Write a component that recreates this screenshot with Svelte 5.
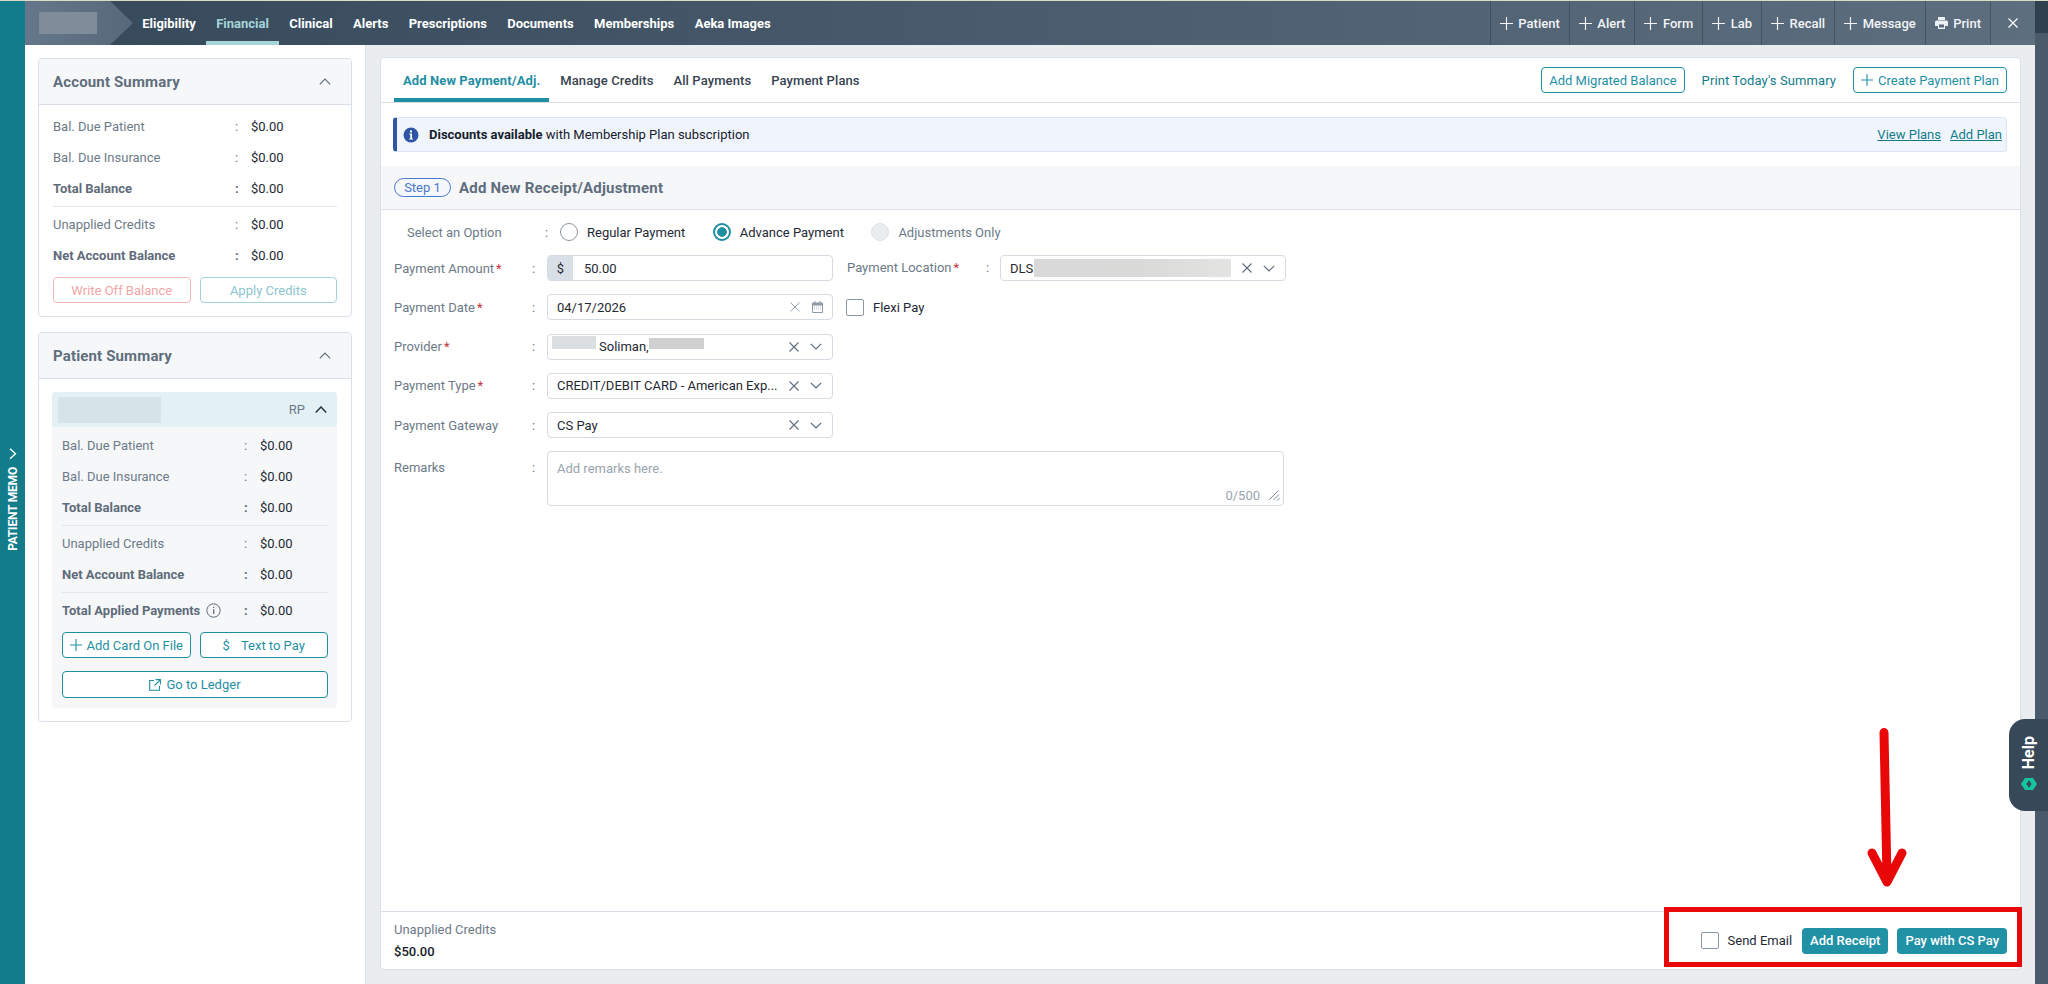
<script lang="ts">
	const navItems = ['Eligibility', 'Financial', 'Clinical', 'Alerts', 'Prescriptions', 'Documents', 'Memberships', 'Aeka Images'];
	const actions = ['Patient', 'Alert', 'Form', 'Lab', 'Recall', 'Message'];
	const tabs = ['Add New Payment/Adj.', 'Manage Credits', 'All Payments', 'Payment Plans'];
</script>

{#snippet plus(size = 13)}
	<svg class="ico" width={size} height={size} viewBox="0 0 13 13"><path d="M6.5 0v13M0 6.5h13" fill="none" stroke="currentColor" stroke-width="1.2" /></svg>
{/snippet}

{#snippet chevronUp(color = '#5f6e7c', weight = 1.1)}
	<svg class="ico" width="12" height="7" viewBox="0 0 12 7"><path d="M.8 6.4L6 1l5.200 5.400" fill="none" stroke={color} stroke-width={weight} /></svg>
{/snippet}

{#snippet clearIcon()}
	<svg class="ico clear" width="10" height="10" viewBox="0 0 10 10"><path d="M.5.5l9 9M9.5.5l-9 9" fill="none" stroke="#5f6e7c" stroke-width="1.1" /></svg>
{/snippet}

{#snippet chevronDown()}
	<svg class="ico chev" width="12" height="7" viewBox="0 0 12 7"><path d="M.8.8L6 6l5.2-5.2" fill="none" stroke="#5f6e7c" stroke-width="1.2" /></svg>
{/snippet}

{#snippet summaryRow(label, bold = false)}
	<div class="sum-row" class:bold>
		<span class="sum-label">{label}</span>
		<span class="sum-colon">:</span>
		<span class="sum-value">$0.00</span>
	</div>
{/snippet}

<div class="page">
	<aside class="memo">
		<div class="memo-label">
			<span>PATIENT MEMO</span>
			<svg width="8" height="12" viewBox="0 0 8 12"><path d="M1 1l5.5 5L1 11" fill="none" stroke="#fff" stroke-width="1.4" /></svg>
		</div>
	</aside>

	<div class="center">
		<header class="topbar">
			<div class="logo"><span class="logo-redact"></span></div>
			<nav class="nav">
				{#each navItems as item}
					<span class="nav-item" class:active={item === 'Financial'}>{item}</span>
				{/each}
			</nav>
			<div class="actions">
				{#each actions as action}
					<span class="action">{@render plus()}{action}</span>
				{/each}
				<span class="action">
					<svg class="ico" width="13" height="12" viewBox="0 0 13 12"><path d="M3 0h7v3H3zM1.5 3.6h10a1.5 1.5 0 0 1 1.5 1.5V9h-3v3H3V9H0V5.1a1.5 1.5 0 0 1 1.5-1.5z" fill="#eef1f3" /><rect x="4" y="7.5" width="5" height="3" fill="#5a6b7b" /></svg>
					Print
				</span>
				<span class="action close">
					<svg width="10" height="10" viewBox="0 0 10 10"><path d="M.5.5l9 9M9.5.5l-9 9" fill="none" stroke="#fff" stroke-width="1.2" /></svg>
				</span>
			</div>
		</header>

		<div class="body">
			<section class="left">
				<div class="panel account">
					<div class="panel-head">
						<h2>Account Summary</h2>
						{@render chevronUp()}
					</div>
					<div class="panel-body">
						{@render summaryRow('Bal. Due Patient')}
						{@render summaryRow('Bal. Due Insurance')}
						{@render summaryRow('Total Balance', true)}
						<hr />
						{@render summaryRow('Unapplied Credits')}
						{@render summaryRow('Net Account Balance', true)}
						<div class="panel-btns">
							<span class="btn-off red">Write Off Balance</span>
							<span class="btn-off teal">Apply Credits</span>
						</div>
					</div>
				</div>

				<div class="panel patient">
					<div class="panel-head">
						<h2>Patient Summary</h2>
						{@render chevronUp()}
					</div>
					<div class="patient-body">
						<div class="inner">
							<div class="inner-head">
								<span class="inner-redact"></span>
								<span class="rp">RP</span>
								{@render chevronUp('#26333f', 1.5)}
							</div>
							<div class="inner-rows">
								{@render summaryRow('Bal. Due Patient')}
								{@render summaryRow('Bal. Due Insurance')}
								{@render summaryRow('Total Balance', true)}
								<hr />
								{@render summaryRow('Unapplied Credits')}
								{@render summaryRow('Net Account Balance', true)}
								<hr />
								<div class="sum-row bold">
									<span class="sum-label">Total Applied Payments
										<svg class="ico info" width="15" height="15" viewBox="0 0 15 15"><circle cx="7.5" cy="7.5" r="6.7" fill="none" stroke="#5f6e7c" stroke-width="1" /><path d="M7.7 3.7v1.2M7.7 6.3v4.8" stroke="#5f6e7c" stroke-width="1.3" /></svg>
									</span>
									<span class="sum-colon">:</span>
									<span class="sum-value">$0.00</span>
								</div>
								<div class="inner-btns">
									<span class="btn-line">{@render plus(12)}Add Card On File</span>
									<span class="btn-line"><span class="dollar">$</span>Text to Pay</span>
								</div>
								<span class="btn-line ledger">
									<svg class="ico" width="12" height="12" viewBox="0 0 12 12"><path d="M5 1.5H.7v9.8h9.8V7M6.5.6h4.9v4.9M11.2.8L5.5 6.5" fill="none" stroke="currentColor" stroke-width="1.1" /></svg>
									Go to Ledger
								</span>
							</div>
						</div>
					</div>
				</div>
			</section>

			<section class="right">
				<div class="card">
					<div class="tabs">
						{#each tabs as tab, i}
							<span class="tab" class:active={i === 0}>{tab}</span>
						{/each}
						<div class="tab-actions">
							<span class="btn-outline">Add Migrated Balance</span>
							<span class="link-plain">Print Today's Summary</span>
							<span class="btn-outline">{@render plus(12)}Create Payment Plan</span>
						</div>
					</div>

					<div class="banner">
						<svg class="ico" width="16" height="16" viewBox="0 0 16 16"><circle cx="8" cy="8" r="7.5" fill="#2f55a4" /><rect x="7" y="3.4" width="2" height="2" fill="#fff" /><path d="M6.3 6.6H9v5h1v1H6.3v-1h1v-4h-1z" fill="#fff" /></svg>
						<span class="banner-text"><b>Discounts available</b> with Membership Plan subscription</span>
						<span class="banner-links"><u>View Plans</u><u>Add Plan</u></span>
					</div>

					<div class="step">
						<span class="pill">Step 1</span>
						<h3>Add New Receipt/Adjustment</h3>
					</div>

					<div class="form">
						<div class="option-row">
							<span class="opt-label">Select an Option</span>
							<span class="colon">:</span>
							<span class="radio-item"><i class="radio"></i>Regular Payment</span>
							<span class="radio-item"><i class="radio on"></i>Advance Payment</span>
							<span class="radio-item off"><i class="radio dis"></i>Adjustments Only</span>
						</div>

						<div class="fields">
							<div class="row">
								<span class="label">Payment Amount<em>*</em></span>
								<span class="colon">:</span>
								<div class="field amount"><span class="addon">$</span><span class="val">50.00</span></div>
								<span class="label second up">Payment Location<em>*</em></span>
								<span class="colon up loc">:</span>
								<div class="field">
									<span class="val">DLS</span><span class="redact loc-redact"></span>
									{@render clearIcon()}{@render chevronDown()}
								</div>
							</div>
							<div class="row">
								<span class="label">Payment Date<em>*</em></span>
								<span class="colon">:</span>
								<div class="field">
									<span class="val">04/17/2026</span>
									<svg class="ico clear soft" width="10" height="10" viewBox="0 0 10 10"><path d="M.5.5l9 9M9.5.5l-9 9" fill="none" stroke="#98a3ae" stroke-width="1" /></svg>
									<svg class="ico cal" width="11" height="12" viewBox="0 0 11 12"><path d="M1 1.5h9a1 1 0 0 1 1 1V11a1 1 0 0 1-1 1H1a1 1 0 0 1-1-1V2.500a1 1 0 0 1 1-1zM1 4.500V11h9V4.500z" fill="#8e99a4" fill-rule="evenodd" /><path d="M3 0v2M8 0v2" stroke="#8e99a4" /><path d="M2 6h7M2 8h7" stroke="#b9c1c9" stroke-dasharray="1 1" /></svg>
								</div>
								<label class="check-item"><i class="check"></i>Flexi Pay</label>
							</div>
							<div class="row">
								<span class="label">Provider<em>*</em></span>
								<span class="colon">:</span>
								<div class="field provider">
									<span class="redact p1"></span><span class="val">Soliman,</span><span class="redact p2"></span>
									{@render clearIcon()}{@render chevronDown()}
								</div>
							</div>
							<div class="row">
								<span class="label">Payment Type<em>*</em></span>
								<span class="colon">:</span>
								<div class="field">
									<span class="val">CREDIT/DEBIT CARD - American Exp...</span>
									{@render clearIcon()}{@render chevronDown()}
								</div>
							</div>
							<div class="row">
								<span class="label">Payment Gateway</span>
								<span class="colon">:</span>
								<div class="field">
									<span class="val">CS Pay</span>
									{@render clearIcon()}{@render chevronDown()}
								</div>
							</div>
							<div class="row remarks">
								<span class="label">Remarks</span>
								<span class="colon">:</span>
								<div class="textarea">
									<span class="placeholder">Add remarks here.</span>
									<div class="counter">
										<span>0/500</span>
										<svg width="11" height="11" viewBox="0 0 11 11"><path d="M.5 9.500l9-9M4.500 10l5.500-5.500M8 10.500l2.500-2.500" fill="none" stroke="#7d8995" stroke-width="1" /></svg>
									</div>
								</div>
							</div>
						</div>
					</div>

					<footer class="foot">
						<div class="foot-left">
							<span class="foot-label">Unapplied Credits</span>
							<strong>$50.00</strong>
						</div>
						<div class="foot-right">
							<label class="check-item send"><i class="check"></i>Send Email</label>
							<span class="btn-solid">Add Receipt</span>
							<span class="btn-solid">Pay with CS Pay</span>
						</div>
					</footer>
				</div>
			</section>
		</div>
	</div>

	<div class="edge"></div>

	<div class="help">
		<span>Help</span>
		<svg width="16" height="12" viewBox="0 0 16 12"><path d="M0 6l4-6h8l4 6-4 6H4z" fill="#12c79b" /><path d="M8 2l2.600 4L8 10 5.400 6z" fill="#374858" /></svg>
	</div>

	<!-- annotation drawn over the screenshot -->
	<div class="mark-box"></div>
	<svg class="mark-arrow" width="44" height="160" viewBox="0 0 44 160">
		<path d="M19 4.500l3 145M7 125l15 29 15-29" fill="none" stroke="#e80808" stroke-width="9" stroke-linecap="round" stroke-linejoin="round" />
	</svg>
</div>

<style>
	:global(html),
	:global(body) {
		height: 984px;
		overflow: hidden;
	}

	:global(body) {
		margin: 0;
		font-family: Roboto, 'Liberation Sans', sans-serif;
		font-size: 13px;
		color: #16202b;
	}

	.page {
		position: relative;
		display: flex;
		width: 2048px;
		height: 984px;
		overflow: hidden;
		background: #fff;
		border-top: 1px solid #dcdcc6;
		box-sizing: border-box;
	}

	.ico {
		flex: none;
	}

	/* Memo strip */
	.memo {
		flex: none;
		width: 25px;
		background: #137c8b;
		display: flex;
		align-items: center;
		justify-content: center;
		padding-top: 14px;
		box-sizing: border-box;
	}

	.memo-label {
		display: flex;
		align-items: center;
		gap: 7px;
		writing-mode: vertical-rl;
		transform: rotate(180deg);
		color: #fff;
		font-size: 12px;
		font-weight: 700;
		letter-spacing: -0.2px;
	}

	.memo-label svg {
		transform: rotate(180deg);
	}

	.center {
		flex: none;
		width: 2010px;
		display: flex;
		flex-direction: column;
	}

	.edge {
		flex: 1;
		background: linear-gradient(#2f404e 0 32px, #4a5a68 32px);
	}

	/* Top bar */
	.topbar {
		flex: none;
		height: 44px;
		display: flex;
		background: linear-gradient(90deg, #36495a, #5d6e7f);
	}

	.logo {
		flex: none;
		width: 108px;
		background: linear-gradient(90deg, #65778a, #566879);
		clip-path: polygon(0 0, 85px 0, 108px 22px, 85px 44px, 0 44px);
		display: flex;
		align-items: center;
		padding-left: 14px;
		box-sizing: border-box;
	}

	.logo-redact {
		width: 58px;
		height: 22px;
		background: #7e8d99;
	}

	.nav {
		display: flex;
		margin-left: -1px;
	}

	.nav-item {
		display: flex;
		align-items: center;
		padding: 0 10.200px;
		color: #fff;
		font-weight: 700;
		box-sizing: border-box;
		border-bottom: 4px solid transparent;
		border-top: 4px solid transparent;
	}

	.nav-item.active {
		color: #a6d5da;
		border-bottom-color: #a6d5da;
	}

	.actions {
		display: flex;
		margin-left: auto;
	}

	.action {
		display: flex;
		align-items: center;
		gap: 5.500px;
		padding: 0 9px;
		border-left: 1px solid rgba(40, 55, 68, 0.45);
		color: #f2f4f6;
		font-weight: 500;
	}

	.action.close {
		padding: 0 17px;
	}

	/* Body */
	.body {
		flex: 1;
		display: flex;
		min-height: 0;
	}

	.left {
		flex: none;
		width: 340px;
		padding: 13px 13px 0;
		box-sizing: border-box;
	}

	.panel {
		border: 1px solid #d9e0e8;
		border-radius: 4px;
		background: #fff;
		overflow: hidden;
	}

	.panel + .panel {
		margin-top: 15px;
	}

	.panel-head {
		height: 45px;
		display: flex;
		align-items: center;
		justify-content: space-between;
		padding: 0 20px 0 14px;
		background: #f6f7f9;
		border-bottom: 1px solid #d9e0e8;
	}

	h2 {
		margin: 0;
		font-size: 15px;
		font-weight: 700;
		letter-spacing: 0.15px;
		color: #5f6e7d;
	}

	.panel-body {
		padding: 6px 14px 0;
		height: 211px;
		box-sizing: border-box;
	}

	.sum-row {
		display: flex;
		align-items: center;
		height: 31px;
		color: #6d7a88;
	}

	.sum-label {
		width: 182px;
		flex: none;
		display: flex;
		align-items: center;
		gap: 6px;
	}

	.sum-colon {
		width: 16px;
		flex: none;
	}

	.sum-value {
		color: #1f2933;
	}

	.sum-row.bold {
		color: #5f6c7a;
		font-weight: 700;
	}

	.sum-row.bold .sum-value {
		font-weight: 400;
	}

	hr {
		border: 0;
		border-top: 1px solid #e3e7ec;
		margin: 2px 0;
	}

	.panel-btns {
		display: flex;
		gap: 9px;
		margin-top: 6px;
	}

	.btn-off {
		flex: 1;
		height: 26px;
		display: flex;
		align-items: center;
		justify-content: center;
		border: 1px solid;
		border-radius: 4px;
		box-sizing: border-box;
	}

	.btn-off.red {
		color: #f0a6a6;
		border-color: #f2b7b7;
	}

	.btn-off.teal {
		color: #8cc5cf;
		border-color: #a3d2da;
	}

	.patient-body {
		padding: 13px 14px 13px 13px;
	}

	.inner {
		background: #f5f7f9;
		border-radius: 4px;
		height: 316px;
	}

	.inner-head {
		height: 35px;
		display: flex;
		align-items: center;
		padding: 0 10px 0 6px;
		background: #e3f1f5;
		border-radius: 4px;
	}

	.inner-redact {
		width: 103px;
		height: 26px;
		background: #d6e4e8;
		margin-right: auto;
	}

	.rp {
		color: #6d7a88;
		margin-right: 10px;
	}

	.inner-rows {
		padding: 3px 9px 0 10px;
	}

	.inner-rows .sum-label {
		width: 182px;
	}

	.inner-btns {
		display: flex;
		gap: 9px;
		margin-top: 6px;
	}

	.btn-line {
		flex: 1;
		height: 26px;
		display: flex;
		align-items: center;
		justify-content: center;
		gap: 5px;
		color: #1f8fa3;
		background: #fff;
		border: 1px solid #1f8fa3;
		border-radius: 4px;
		box-sizing: border-box;
	}

	.dollar {
		margin-right: 6px;
	}

	.ledger {
		height: 27px;
		margin-top: 13px;
	}

	/* Main card */
	.right {
		flex: 1;
		background: #e9edf0;
		padding: 12px 14px 14px 14px;
		border-left: 1px solid #dfe4e9;
		box-sizing: border-box;
		min-width: 0;
	}

	.card {
		height: 100%;
		display: flex;
		flex-direction: column;
		background: #fff;
		border: 1px solid #d9e0e8;
		border-radius: 4px;
		box-sizing: border-box;
	}

	.tabs {
		flex: none;
		height: 45px;
		display: flex;
		padding: 0 13px;
		border-bottom: 1px solid #d9e0e8;
		box-sizing: border-box;
	}

	.tab {
		display: flex;
		align-items: center;
		padding: 0 9px;
		color: #37434f;
		font-weight: 500;
		letter-spacing: 0.1px;
		border-bottom: 4px solid transparent;
		border-top: 4px solid transparent;
	}

	.tab + .tab {
		margin-left: 2px;
	}

	.tab.active {
		color: #1f8fa3;
		border-bottom-color: #1f8fa3;
		font-weight: 700;
	}

	.tab-actions {
		margin-left: auto;
		display: flex;
		align-items: center;
		gap: 17px;
	}

	.btn-outline {
		height: 26px;
		display: flex;
		align-items: center;
		gap: 5px;
		padding: 0 7px;
		color: #1f8fa3;
		border: 1px solid #1f8fa3;
		border-radius: 4px;
		box-sizing: border-box;
	}

	.link-plain {
		color: #137c8b;
		letter-spacing: 0.1px;
	}

	.banner {
		flex: none;
		height: 35px;
		margin: 14px 13px 14px 12px;
		display: flex;
		align-items: center;
		padding: 0 4px 0 6px;
		background: #f0f5fd;
		border: 1px solid #dbe5f5;
		border-left: 4px solid #2f55a4;
		border-radius: 4px;
		box-sizing: border-box;
	}

	.banner-text {
		margin-left: 10px;
	}

	.banner-links {
		margin-left: auto;
		display: flex;
		gap: 9px;
		color: #137c8b;
	}

	.step {
		flex: none;
		height: 44px;
		display: flex;
		align-items: center;
		padding: 0 13px;
		background: #f6f7f9;
		border-bottom: 1px solid #dde2e8;
		box-sizing: border-box;
	}

	.pill {
		height: 19px;
		width: 57px;
		display: flex;
		align-items: center;
		justify-content: center;
		color: #4a7ad0;
		border: 1px solid #4a7ad0;
		border-radius: 10px;
		box-sizing: border-box;
	}

	h3 {
		margin: 0 0 0 8px;
		font-size: 15px;
		font-weight: 700;
		letter-spacing: 0.2px;
		color: #5f6e7d;
	}

	/* Form */
	.form {
		flex: 1;
		padding: 0 13px;
		min-height: 0;
	}

	.option-row {
		height: 44px;
		display: flex;
		align-items: center;
		color: #6d7a88;
	}

	.opt-label {
		width: 151px;
		padding-left: 13px;
		flex: none;
		box-sizing: border-box;
	}

	.colon {
		width: 15px;
		flex: none;
		color: #6d7a88;
	}

	.radio-item {
		display: flex;
		align-items: center;
		gap: 9px;
		color: #1f2933;
		margin-right: 27.500px;
	}

	.radio-item.off {
		color: #6d7a88;
	}

	.radio {
		width: 18px;
		height: 18px;
		border: 1px solid #8b97a3;
		border-radius: 50%;
		box-sizing: border-box;
		background: #fff;
	}

	.radio.on {
		border: 2px solid #1f8fa3;
		background: radial-gradient(circle, #1f8fa3 0 4.500px, #fff 5px);
	}

	.radio.dis {
		background: #e9edf0;
		border-color: #dfe4e9;
	}

	.fields {
		display: flex;
		flex-direction: column;
		gap: 13.300px;
		margin-top: 1px;
	}

	.row {
		height: 26px;
		display: flex;
		align-items: center;
	}

	.label {
		width: 138px;
		flex: none;
		color: #6d7a88;
	}

	.label em {
		color: #c8323c;
		font-style: normal;
		margin-left: 2px;
	}

	.label.second {
		width: 139px;
		margin-left: 14px;
	}

	.up {
		margin-bottom: 2px;
	}

	.colon.loc {
		width: 14px;
	}

	.field {
		flex: none;
		width: 286px;
		height: 100%;
		display: flex;
		align-items: center;
		padding: 0 9px;
		border: 1px solid #d5dbe2;
		border-radius: 4px;
		box-sizing: border-box;
		color: #1f2933;
		overflow: hidden;
	}

	.field .clear {
		margin-left: auto;
	}

	.field .chev {
		margin-left: 11px;
		margin-right: 1px;
	}

	.cal {
		margin-left: 12px;
	}

	.field.amount {
		padding: 0;
	}

	.addon {
		width: 25px;
		height: 100%;
		display: flex;
		align-items: center;
		justify-content: center;
		background: #d9dfe6;
		margin-right: 11px;
	}

	.redact {
		display: block;
		flex: none;
	}

	.loc-redact {
		width: 197px;
		height: 18px;
		background: linear-gradient(90deg, #d9d9d9, #d9d9d8 50%, #e3e4e2);
		margin-left: 1px;
	}

	.field.provider {
		padding-left: 4px;
	}

	.p1 {
		width: 44px;
		height: 13px;
		background: #dbdee1;
		margin: -8px 3px 0 0;
	}

	.p2 {
		width: 55px;
		height: 11px;
		background: #d0d0d0;
		margin-top: -6px;
	}

	.check-item {
		display: flex;
		align-items: center;
		gap: 9px;
		color: #1f2933;
	}

	.row .check-item {
		margin-left: 13px;
	}

	.check {
		width: 18px;
		height: 17px;
		border: 1px solid #8b97a3;
		border-radius: 2px;
		box-sizing: border-box;
		background: #fff;
	}

	.row.remarks {
		height: 55px;
		align-items: flex-start;
	}

	.row.remarks .label,
	.row.remarks .colon {
		padding-top: 9px;
	}

	.textarea {
		flex: none;
		width: 737px;
		height: 100%;
		position: relative;
		border: 1px solid #d5dbe2;
		border-radius: 4px;
		box-sizing: border-box;
		padding: 9px;
	}

	.placeholder {
		color: #9aa5b0;
	}

	.counter {
		position: absolute;
		right: 3px;
		bottom: 2px;
		display: flex;
		align-items: center;
		gap: 9px;
		color: #9aa5b0;
	}

	/* Footer */
	.foot {
		flex: none;
		height: 58px;
		display: flex;
		align-items: center;
		justify-content: space-between;
		padding: 0 13px;
		border-top: 1px solid #d9e0e8;
		box-sizing: border-box;
	}

	.foot-left {
		display: flex;
		flex-direction: column;
		gap: 7px;
	}

	.foot-label {
		color: #6d7a88;
	}

	.foot-left strong {
		font-weight: 500;
		color: #16202b;
	}

	.foot-right {
		display: flex;
		align-items: center;
		gap: 9px;
	}

	.send {
		margin-right: 1px;
	}

	.btn-solid {
		height: 26px;
		display: flex;
		align-items: center;
		padding: 0 8px;
		color: #fff;
		background: #2191a6;
		border-radius: 4px;
		font-weight: 500;
	}

	/* Overlays */
	.help {
		position: absolute;
		left: 2009px;
		top: 718px;
		width: 39px;
		height: 92px;
		display: flex;
		flex-direction: column;
		align-items: center;
		justify-content: center;
		gap: 9px;
		padding-bottom: 4px;
		box-sizing: border-box;
		background: #374858;
		border-radius: 16px 0 0 16px;
		color: #fff;
	}

	.help span {
		writing-mode: vertical-rl;
		transform: rotate(180deg);
		font-size: 16px;
		font-weight: 700;
	}

	.mark-box {
		position: absolute;
		left: 1664px;
		top: 906px;
		width: 358px;
		height: 60px;
		border: 5px solid #e80808;
		box-sizing: border-box;
	}

	.mark-arrow {
		position: absolute;
		left: 1865px;
		top: 727px;
	}
</style>
